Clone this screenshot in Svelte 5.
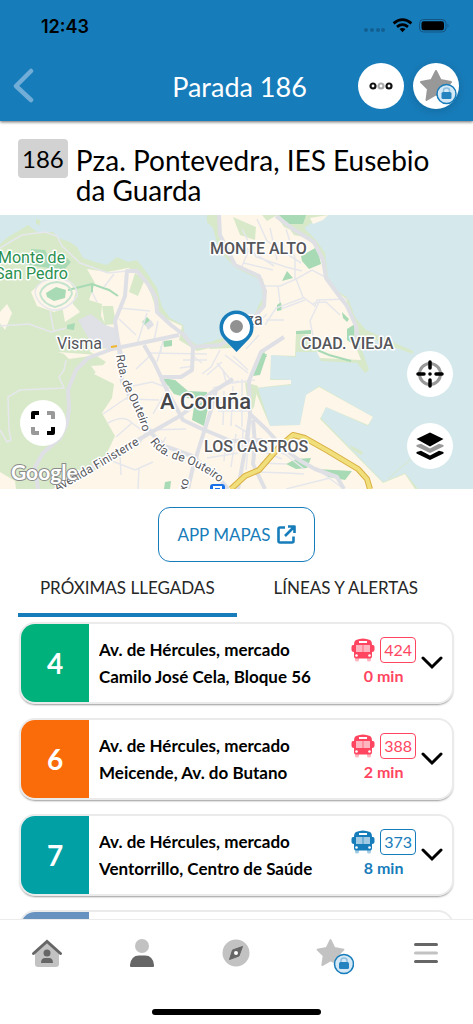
<script lang="ts">
    let activeTab = "arrivals";
    let openLine = "";

    const arrivals = [
        { line: "4", color: "#00b17b", from: "Av. de Hércules, mercado", to: "Camilo José Cela, Bloque 56", bus: 424, min: 0 },
        { line: "6", color: "#fa6b0a", from: "Av. de Hércules, mercado", to: "Meicende, Av. do Butano", bus: 388, min: 2 },
        { line: "7", color: "#00a0a4", from: "Av. de Hércules, mercado", to: "Ventorrillo, Centro de Saúde", bus: 373, min: 8 },
        { line: "11", color: "#6893c1", from: "", to: "", bus: 0, min: 0 },
    ];

    function toggleLine(line: string) {
        openLine = openLine === line ? "" : line;
    }
</script>

<div class="app">
    <header class="header">
        <div class="status">
            <span class="time">12:43</span>
            <svg class="signals" viewBox="0 0 86 16" aria-hidden="true">
                <g fill="#125f91">
                    <circle cx="3" cy="12" r="2" />
                    <circle cx="9" cy="12" r="2" />
                    <circle cx="15" cy="12" r="2" />
                    <circle cx="20" cy="12" r="2" />
                </g>
                <g fill="none" stroke="#000" stroke-width="2.8">
                    <path d="M30.600 5.300 Q39.500 -2 48.400 5.300" />
                    <path d="M34 8.800 Q39.500 4.500 45 8.800" />
                </g>
                <path d="M36.500 11 Q39.500 8.800 42.500 11 L39.500 14.300 Z" />
                <rect x="56.500" y="1.500" width="26.500" height="12.500" rx="4" fill="none" stroke="#125583" />
                <rect x="58.500" y="3.300" width="22.500" height="9" rx="2.200" />
                <path d="M84.500 5.800 Q86.500 7.700 84.500 9.800 Z" fill="#125583" />
            </svg>
        </div>
        <div class="bar">
            <button class="back" aria-label="Volver">
                <svg width="22" height="36" viewBox="0 0 22 36">
                    <path d="M19 3 L4 18 L19 32" fill="none" stroke="#72add7" stroke-width="4.500" stroke-linecap="round" stroke-linejoin="round" />
                </svg>
            </button>
            <h1>Parada 186</h1>
            <div class="actions">
                <button class="round" aria-label="Más opciones">
                    <svg width="24" height="10" viewBox="0 0 24 10" fill="none" stroke-width="2.200">
                        <circle cx="4" cy="5" r="2.500" stroke="#111" />
                        <circle cx="12" cy="5" r="2.500" stroke="#aaa" />
                        <circle cx="20" cy="5" r="2.500" stroke="#111" />
                    </svg>
                </button>
                <button class="round shaded" aria-label="Favorita">
                    <svg width="46" height="46" viewBox="0 0 46 46">
                        {@render star("#989898")}
                        {@render lock()}
                    </svg>
                </button>
            </div>
        </div>
    </header>

    <section class="stop">
        <span class="stop-number">186</span>
        <h2>Pza. Pontevedra, IES Eusebio da Guarda</h2>
    </section>

    <section class="map">
        <svg class="map-drawing" viewBox="0 215 473 274" preserveAspectRatio="xMidYMid slice" role="img" aria-label="Mapa de A Coruña">
            <rect x="0" y="215" width="473" height="274" fill="#d5e8eb" />
            <!-- coast -->
            <path fill="#d8e9c9" d="M0 244 L8 237 20 230 28 225 37 232 53 232 58 238 70 242 77 247 83 258 95 262 107 265 117 257 128 262 137 260 147 273 157 288 162 307 170 318 183 325 185 337 197 345 220 340 240 332 253 317 263 297 261 280 246 273 236 268 225 257 217 243 213 228 207 222 207 215 L328 215 313 222 304 228 316 240 325 253 328 277 333 288 348 298 355 317 366 330 413 351 413 354 364 336 362 350 369 370 365 373 357 363 321 361 318 352 296 352 296 357 271 355 270 379 291 380 291 385 258 388 270 426 300 425 306 395 319 386 373 417 368 426 326 407 321 418 383 482 405 473 418 489 L0 489 Z" />
            <path fill="#fef6e9" d="M87 269 L107 272 128 268 140 272 151 294 158 315 182 326 179 340 197 351 222 345 240 336 257 318 265 297 263 279 246 271 236 265 226 251 221 239 219 215 L276 215 284 227 303 235 319 250 325 277 334 290 345 298 353 317 358 330 357 350 361 360 320 358 308 335 296 333 295 356 271 355 270 380 291 380 291 384 254 388 270 426 300 425 306 395 319 387 373 417 368 425 326 407 320 419 383 483 405 474 415 489 L53 489 100 468 115 436 102 413 112 398 114 384 94 374 106 362 89 351 120 346 109 331 101 316 102 304 89 300 95 283 Z" />
            <path fill="#fef6e9" d="M31 292 L43 281 67 279 76 291 72 306 54 312 37 306 Z M62 306 72 303 80 312 65 322 Z M0 312 L7 304 12 313 5 330 0 323 Z M58 352 L97 355 69 359 64 354 Z M91 366 L106 365 97 374 Z M0 472 L15 481 16 489 0 489 Z M310 218 L328 215 323 220 313 224 Z" />
            <!-- parks -->
            <g fill="#d8e9c9">
                <path d="M135 273 L145 279 138 296 129 292 Z" />
                <path d="M233 217 L256 227 255 240 240 235 Z" />
                <path d="M262 215 L277 215 267 221 Z" />
                <path d="M102 306 L113 306 116 324 105 325 Z" />
                <path d="M215 340 L243 334 231 348 209 349 Z" />
                <path d="M286 224 L305 228 304 237 294 235 Z" />
                <path d="M245 382 L258 386 254 407 249 414 Z" />
                <path d="M36 219 L40 220 40 225 36 224 Z M350 445 L363 452 361 455 352 449 Z" />
            </g>
            <path fill="none" stroke="#d8e9c9" d="M388 479 L412 458" />
            <g fill="#a7dab5">
                <path d="M46 293 L56 287 66 290 65 298 54 301 47 297 Z" />
                <path d="M31 249 L45 250 49 258 66 257 71 262 64 270 28 265 19 260 31 255 Z" />
                <path d="M67 325 L75 323 74 330 67 329 Z M142 322 L147 317 150 320 146 326 Z M163 341 172 340 172 346 164 347 Z" />
                <path d="M162 378 L175 380 188 391 207 392 208 408 204 426 192 420 195 400 174 394 Z" />
                <path d="M279 215 L306 215 303 224 289 224 Z M301 256 317 247 321 264 309 269 302 261 Z" />
                <path d="M282 281 L287 271 293 278 Z M277 305 L281 302 282 310 277 311 Z" />
                <path d="M342 312 L349 319 347 322 343 318 Z M347 329 L355 324 354 345 347 340 Z M296 331 L311 330 311 334 296 334 Z" />
                <path d="M253 376 L258 356 267 354 260 375 Z M259 356 264 352 267 357 Z" />
                <path d="M286 464 L296 459 311 458 307 468 296 469 Z M316 469 L352 471 345 480 329 477 Z" />
                <path d="M165 482 L171 481 170 489 164 489 Z" />
            </g>
            <path fill="none" stroke="#a7dab5" stroke-width="2" d="M68 290 L92 284 109 290 118 296 M92 284 L92 293 M305 349 L315 349 329 355 351 361" />
            <path fill="#dfe1e6" d="M78 320 L91 314 105 325 118 329 117 347 107 349 90 341 Z M145 324 L151 320 154 325 148 330 Z" />
            <path fill="none" stroke="#c5e4d0" stroke-width="2" d="M40 294 Q43 283 57 282 Q71 284 72 294 Q68 304 55 307 Q43 304 40 294" />
            <!-- side streets -->
            <g fill="none" stroke="#e6e7ec" stroke-width="1.500">
                <path d="M0 248 L10 242 22 235 45 232 57 236 62 246 80 263 108 273 127 271" />
                <path d="M0 326 L29 324 51 332 66 328 M50 311 L54 332 M66 360 L64 370 59 377 64 388 20 390 8 397 9 430 11 440 7 442 0 430" />
                <path d="M35 292 Q37 280 57 278 Q78 281 77 296 Q68 311 52 310 Q37 305 35 292" />
                <path d="M104 287 L114 274 M92 292 L97 302 M119 308 L150 311 M119 319 L136 335 M137 344 L147 313 M154 341 L158 321 M157 362 L164 338 M149 353 L207 354 M161 346 L161 354" />
                <path d="M136 369 L152 354 M133 386 L152 382 163 386 M126 399 L159 400 M153 414 L169 386 M103 414 L128 397 M116 437 L132 423 144 432 M108 423 Q124 414 132 423 M112 461 L135 470 153 462 M139 445 L147 430 186 429 M120 455 L121 475 M139 468 L138 489 M158 451 L166 437 M198 450 L197 469 M188 461 L217 471 M202 432 L207 427" />
                <path d="M242 229 L256 257 286 267 302 271 M237 242 L274 266 M249 249 L241 269 M257 219 L267 241 301 263 M270 228 L277 260 M286 229 L295 258 295 280 M244 263 L273 270 M296 279 L312 270 327 278 M264 286 L280 286 296 279 303 297 315 306 317 300 348 299 M278 286 L280 303 M320 300 L310 321 313 336 M303 298 L276 308 265 325 M267 314 L242 337 M281 309 L305 300 M340 315 L326 302 313 303 M266 320 L284 320 M246 349 L259 335 M233 356 L248 370" />
                <path d="M217 363 L233 383 255 380 M225 355 L248 373 M207 375 L222 362 M213 388 L239 381 M226 382 L223 370 M214 403 L245 402 M218 411 L252 411 M224 391 L223 425 M233 386 L231 426 M242 379 L242 427 M235 425 L250 434 M205 451 L232 448 M207 458 L238 453 M226 439 L224 461 M236 434 L231 467 M243 430 L242 450 M250 427 L246 470" />
                <path d="M268 447 L286 455 304 469 M257 472 L287 473 304 474 M260 450 L282 459 M260 463 L286 464 M286 489 L330 478 M318 470 L344 489" />
                <path d="M180 368 L194 366 M183 360 L207 360 M193 356 L202 363 M220 350 L211 367 202 374" />
            </g>
            <!-- main streets -->
            <g fill="none" stroke="#dfe0e5" stroke-width="4" stroke-linejoin="round">
                <path d="M38 489 L35 467 43 453 60 438 67 424 69 408 68 390 76 370 88 358 112 349 146 342 179 335" />
                <path d="M122 360 L118 341 115 321 125 296 127 271 137 271 148 284 156 298 157 312 171 325 184 335 193 347 220 345 231 339" />
                <path d="M119 347 L122 382 136 408 151 433 165 446 192 456 218 477 228 489" />
                <path d="M62 489 L84 472 117 452 150 433 180 416 215 390" />
                <path d="M144 345 L154 362 161 377 181 377 192 370 193 348" />
                <path d="M161 378 L171 398 183 420 200 428 231 441 263 440" />
                <path d="M188 489 L193 467 203 435 212 407 216 390 233 379 M238 489 L245 450 250 416 249 381 261 352 284 337" />
                <path d="M219 215 L220 235 235 265 259 276 265 291 264 306 246 327 241 335" />
                <path d="M276 216 L293 229 314 242 323 260 326 278 337 293 347 306 356 326 358 350" />
                <path d="M250 414 L267 430 284 449 299 460 315 469 337 477 344 489 M253 420 L255 444 253 464 265 489" />
            </g>
            <g fill="none" stroke-linejoin="round">
                <path stroke="#d9af45" stroke-width="6" d="M231 489 L245 476 259 470 280 446 293 435 305 438 328 451 358 469 367 479 370 489" />
                <path stroke="#f0df7a" stroke-width="4" d="M231 489 L245 476 259 470 280 446 293 435 305 438 328 451 358 469 367 479 370 489" />
            </g>
            <path stroke="#f0b62d" stroke-width="2" d="M111 347 L117 346" />
            <g class="road-labels">
                <path id="outeiro-north" fill="none" d="M116 355 Q119 379 128 396 Q138 413 143 433" />
                <path id="outeiro-south" fill="none" d="M150 442 Q158 455 180 461 Q200 467 220 483" />
                <path id="finisterre" fill="none" d="M57 492 Q93 472 138 445" />
                <text><textPath href="#outeiro-north">Rda. de Outeiro</textPath></text>
                <text><textPath href="#outeiro-south">Rda. de Outeiro</textPath></text>
                <text><textPath href="#finisterre">Avenida Finisterre</textPath></text>
                <text transform="translate(186 492) rotate(-76)">xo</text>
            </g>
            <g class="labels">
                <text x="-2" y="263" class="green">Monte de</text>
                <text x="-5" y="279" class="green">San Pedro</text>
                <text x="57" y="349" class="place">Visma</text>
                <text x="210" y="254">MONTE ALTO</text>
                <text x="301" y="349">CDAD. VIEJA</text>
                <text x="204" y="452">LOS CASTROS</text>
                <text x="246" y="325" class="place">za</text>
                <text x="160" y="409" class="city">A Coruña</text>
            </g>
            <rect x="210" y="484" width="15" height="10" rx="3" fill="#1b72e8" />
            <path d="M214 489 V487 H221 V489" fill="none" stroke="#fff" stroke-width="2" />
            <text x="11" y="480" class="google">Google</text>
            <path fill="#177cba" d="M236.500 352 L224 339 A17 17 0 1 1 249 339 Z" />
            <circle cx="236.500" cy="327.500" r="13.500" fill="#fff" />
            <circle cx="236.500" cy="326.500" r="6.500" fill="#919191" />
        </svg>
        <button class="round expand" aria-label="Ampliar mapa">
            <svg width="26" height="26" viewBox="0 0 26 26" fill="none" stroke-width="4" stroke-linejoin="round">
                <path stroke="#000" d="M3 9 V3 H9 M17 23 H23 V17" />
                <path stroke="#999" d="M17 3 H23 V9 M3 17 V23 H9" />
            </svg>
        </button>
        <div class="map-tools">
            <button class="round" aria-label="Centrar mapa">
                <svg width="28" height="28" viewBox="0 0 28 28">
                    <circle cx="14" cy="14" r="10.500" fill="none" stroke="#999" stroke-width="3" />
                    <path d="M14 2 V8 M14 20 V26 M2 14 H8 M20 14 H26" stroke="#000" stroke-width="3.500" stroke-linecap="round" />
                    <circle cx="14" cy="14" r="1.800" />
                </svg>
            </button>
            <button class="round" aria-label="Capas">
                <svg width="28" height="28" viewBox="0 0 28 28">
                    <path d="M14 0.500 L27.500 7 14 14.500 0.500 7 Z" />
                    <path fill="#999" d="M0.500 13 L5 11.800 14 16.500 23 11.800 27.500 13 V14.500 L14 21 0.500 14.500 Z" />
                    <path d="M0.500 20 L5 18.800 14 23.500 23 18.800 27.500 20 V21.500 L14 28 0.500 21.500 Z" />
                </svg>
            </button>
        </div>
    </section>

    <button class="open-map">
        APP MAPAS
        <svg width="19" height="19" viewBox="0 0 19 19" fill="none" stroke="#177cba" stroke-width="2.600" stroke-linejoin="round">
            <path d="M8 2.500 H3 Q1.500 2.500 1.500 4 V16 Q1.500 17.500 3 17.500 H15 Q16.500 17.500 16.500 16 V11.500" />
            <path d="M11 1.500 H17.500 V8 M17 2 L8 11" />
        </svg>
    </button>

    <div class="tabs" role="tablist">
        <button role="tab" class:active={activeTab === "arrivals"} aria-selected={activeTab === "arrivals"} on:click={() => (activeTab = "arrivals")}>PRÓXIMAS LLEGADAS</button>
        <button role="tab" class:active={activeTab === "lines"} aria-selected={activeTab === "lines"} on:click={() => (activeTab = "lines")}>LÍNEAS Y ALERTAS</button>
    </div>

    <main class="list">
        {#each arrivals as item}
            <article class="card">
                <div class="line" style="background-color: {item.color}">{item.from ? item.line : ""}</div>
                {#if item.from}
                    <div class="route">
                        <p>{item.from}</p>
                        <p>{item.to}</p>
                    </div>
                    <div class="arrival" class:soon={item.min < 5}>
                        <div class="bus">
                            <svg width="24" height="24" viewBox="0 0 24 24" fill="currentColor" aria-hidden="true">
                                <path opacity="0.4" d="M4 19 H8 V22 Q8 23.500 6 23.500 Q4 23.500 4 22 Z M16 19 H20 V22 Q20 23.500 18 23.500 Q16 23.500 16 22 Z" />
                                <path fill-rule="evenodd" d="M5 2 Q12 -1 19 2 Q21 3 21 7 H22 Q23.500 7 23.500 9 V12 Q23.500 14 21 14 V18.500 Q21 20.500 19 20.500 H5 Q3 20.500 3 18.500 V14 Q0.500 14 0.500 12 V9 Q0.500 7 2 7 H3 Q3 3 5 2 Z M8 3 V5 H16 V3 Z M5 7 V14 H11.500 V7 Z M12.500 7 V14 H19 V7 Z" />
                                <path opacity="0.4" d="M5 7 H11.500 V14 H5 Z M12.500 7 H19 V14 H12.500 Z" />
                                <circle cx="5.500" cy="17.500" r="1.300" fill="#fff" />
                                <circle cx="18.500" cy="17.500" r="1.300" fill="#fff" />
                            </svg>
                            <span class="bus-number">{item.bus}</span>
                        </div>
                        <span class="minutes">{item.min} min</span>
                    </div>
                    <button class="chevron" aria-label="Ver detalles" aria-expanded={openLine === item.line} on:click={() => toggleLine(item.line)}>
                        <svg width="22" height="14" viewBox="0 0 22 14">
                            <path d="M2 2 L11 11 L20 2" fill="none" stroke="#000" stroke-width="3" stroke-linecap="round" />
                        </svg>
                    </button>
                {/if}
            </article>
        {/each}
    </main>

    <nav class="nav">
        <div class="nav-items">
            <a href="#inicio" aria-label="Inicio">
                <svg width="46" height="40" viewBox="0 0 46 40">
                    <path fill="#c2c2c2" d="M23 10 L35 20 V31 Q35 34 32 34 H14 Q11 34 11 31 V20 Z" />
                    <path d="M9.500 20.500 L23 8.500 L36.500 20.500" fill="none" stroke="#666" stroke-width="3" stroke-linecap="round" />
                    <circle cx="23" cy="20" r="3.500" fill="#666" />
                    <path fill="#666" d="M17 30 Q17 25 21 25 H25 Q29 25 29 30 Z" />
                </svg>
            </a>
            <a href="#perfil" aria-label="Perfil">
                <svg width="46" height="40" viewBox="0 0 46 40">
                    <circle cx="23" cy="13" r="7" fill="#c2c2c2" />
                    <path fill="#666" d="M12 34 Q10.500 34 11 32 Q12 22.500 20 22.500 H26 Q34 22.500 35 32 Q35.500 34 34 34 Z" />
                </svg>
            </a>
            <a href="#explorar" aria-label="Explorar">
                <svg width="46" height="40" viewBox="0 0 46 40">
                    <circle cx="23" cy="20" r="13.500" fill="#c2c2c2" />
                    <path d="M29.500 13.500 L26 23 L16.500 26.500 L19.500 17 Z" fill="#666" stroke="#666" stroke-linejoin="round" />
                    <circle cx="23" cy="20" r="2" fill="#fff" />
                </svg>
            </a>
            <a href="#favoritas" aria-label="Favoritas">
                <svg width="46" height="46" viewBox="0 0 46 46">
                    <g transform="translate(2.500 0) scale(0.87)">
                        {@render star("#c2c2c2")}
                    </g>
                    <g transform="translate(2.500 0)">
                        {@render lock()}
                    </g>
                </svg>
            </a>
            <a href="#menu" aria-label="Menú">
                <svg width="46" height="40" viewBox="0 0 46 40" fill="none" stroke-width="3" stroke-linecap="round">
                    <path stroke="#666" d="M12.500 11.500 H33.500 M12.500 28.500 H33.500" />
                    <path stroke="#c2c2c2" d="M12.500 20 H33.500" />
                </svg>
            </a>
        </div>
        <div class="home-indicator"></div>
    </nav>
</div>

{#snippet star(color)}
    <path fill={color} stroke={color} stroke-width="2" stroke-linejoin="round" d="M23 8 L27.500 17 L38 19 L31 26 L32.500 36 L23 31.500 L13.500 37 L15 26 L8 19 L18.500 17 Z" />
{/snippet}

{#snippet lock()}
    <circle cx="33.500" cy="31" r="9.500" fill="#d5e8f5" stroke="#177cba" stroke-width="1.500" />
    <path d="M30.500 29 V27.500 Q30.500 25 33.500 25 Q36.500 25 36.500 27.500 V29" fill="none" stroke="#8dbfe0" stroke-width="1.500" />
    <rect x="28.500" y="29" width="10" height="7" rx="1.500" fill="#2583bf" />
{/snippet}

<style>
    :global(body) {
        margin: 0;
        background-color: #ffffff;
    }
    .app {
        display: flex;
        flex-direction: column;
        height: 100vh;
        font-family: Lato, "Open Sans", sans-serif;
        color: #000000;
    }
    button {
        padding: 0;
        border: none;
        background: none;
        font-family: inherit;
        color: inherit;
        cursor: pointer;
    }
    svg {
        display: block;
    }
    h1,
    h2,
    p {
        margin: 0;
        font-weight: 400;
    }
    .header {
        flex: none;
        position: relative;
        background-color: #177cba;
        box-shadow: 0 1px 3px rgba(0, 0, 0, 0.6);
    }
    .status {
        display: flex;
        align-items: center;
        justify-content: space-between;
        padding: 16px 24px 0 41px;
        height: 20px;
    }
    .time {
        font-family: Inter, sans-serif;
        font-size: 18px;
        font-weight: 600;
    }
    .signals {
        width: 86px;
        height: 16px;
    }
    .bar {
        display: grid;
        grid-template-columns: 1fr auto 1fr;
        align-items: center;
        height: 70px;
        padding: 15px 14px 0 12px;
    }
    .back {
        justify-self: start;
    }
    h1 {
        padding-left: 8px;
        color: #ffffff;
        font-size: 27px;
    }
    .actions {
        display: flex;
        justify-content: flex-end;
        gap: 9px;
    }
    .round {
        display: flex;
        align-items: center;
        justify-content: center;
        flex: none;
        width: 46px;
        height: 46px;
        border-radius: 50%;
        background-color: #ffffff;
    }
    .shaded {
        box-shadow: 0 2px 10px rgba(0, 0, 0, 0.15);
    }
    .stop {
        flex: none;
        display: flex;
        align-items: flex-start;
        gap: 8px;
        padding: 18px 18px 10px;
    }
    .stop-number {
        padding: 0 4px;
        border-radius: 4px;
        background-color: #d2d2d2;
        font-size: 24px;
        line-height: 39px;
    }
    h2 {
        padding-top: 6px;
        font-size: 28px;
        line-height: 30px;
    }
    .map {
        flex: none;
        position: relative;
    }
    .map-drawing {
        width: 100%;
        height: 274px;
    }
    .labels,
    .road-labels {
        font-family: Roboto, sans-serif;
        fill: #55565a;
        stroke: #ffffff;
        stroke-width: 3px;
        stroke-linejoin: round;
        paint-order: stroke;
    }
    .labels {
        font-size: 16px;
        font-weight: 500;
    }
    .road-labels {
        font-size: 12px;
    }
    .road-labels path {
        stroke: none;
    }
    .place {
        font-weight: 400;
    }
    .green {
        font-weight: 400;
        fill: #2b9150;
    }
    .city {
        font-size: 22px;
        fill: #46474b;
    }
    .google {
        font-family: Lato, sans-serif;
        font-size: 21px;
        font-weight: 700;
        fill: #ffffff;
        stroke: #8b8b8b;
        stroke-width: 2px;
        paint-order: stroke;
    }
    .expand {
        position: absolute;
        left: 20px;
        bottom: 43px;
    }
    .map-tools {
        position: absolute;
        right: 20px;
        bottom: 20px;
        display: flex;
        flex-direction: column;
        gap: 26px;
    }
    .open-map {
        flex: none;
        align-self: center;
        display: flex;
        align-items: center;
        gap: 6px;
        margin-top: 18px;
        padding: 0 18px;
        height: 55px;
        border: 1px solid #177cba;
        border-radius: 12px;
        color: #177cba;
        font-size: 17px;
    }
    .tabs {
        flex: none;
        display: flex;
        padding: 0 18px;
        height: 55px;
    }
    .tabs button {
        flex: 1;
        border-bottom: 4px solid transparent;
        color: #262626;
        font-size: 17px;
    }
    .tabs .active {
        border-color: #177cba;
    }
    .list {
        flex: 1;
        min-height: 0;
        overflow: hidden;
        display: flex;
        flex-direction: column;
        gap: 18px;
        padding: 7px 21px 0;
    }
    .card {
        flex: none;
        display: flex;
        align-items: center;
        height: 78px;
        border-radius: 14px;
        box-shadow: 0 0 0 2px #ebebeb, 0 2px 2px 1px rgba(0, 0, 0, 0.4);
        background-color: #ffffff;
    }
    .line {
        display: flex;
        align-items: center;
        justify-content: center;
        align-self: stretch;
        width: 68px;
        border-radius: 14px 0 0 14px;
        color: #ffffff;
        font-size: 28px;
        font-weight: 700;
    }
    .route {
        flex: 1;
        min-width: 0;
        padding-left: 10px;
        font-size: 17px;
        line-height: 27px;
    }
    .route p {
        font-weight: 700;
        white-space: nowrap;
        overflow: hidden;
        text-overflow: ellipsis;
    }
    .arrival {
        display: flex;
        flex-direction: column;
        align-items: center;
        color: #177cba;
    }
    .soon {
        color: #ff4560;
    }
    .bus {
        display: flex;
        align-items: center;
        gap: 5px;
    }
    .bus-number {
        padding: 0 3px;
        border: 1px solid currentColor;
        border-radius: 4px;
        font-size: 16px;
        line-height: 24px;
    }
    .minutes {
        font-size: 16px;
        font-weight: 700;
        line-height: 26px;
    }
    .chevron {
        padding: 10px 9px 10px 5px;
    }
    .nav {
        flex: none;
        position: relative;
        border-top: 1px solid #ececec;
        background-color: #ffffff;
    }
    .nav-items {
        display: flex;
        height: 89px;
    }
    .nav-items a {
        flex: 1;
        display: flex;
        justify-content: center;
        padding-top: 13px;
    }
    .home-indicator {
        width: 169px;
        height: 6px;
        margin: 0 auto 9px;
        border-radius: 3px;
        background-color: #000000;
    }
</style>
